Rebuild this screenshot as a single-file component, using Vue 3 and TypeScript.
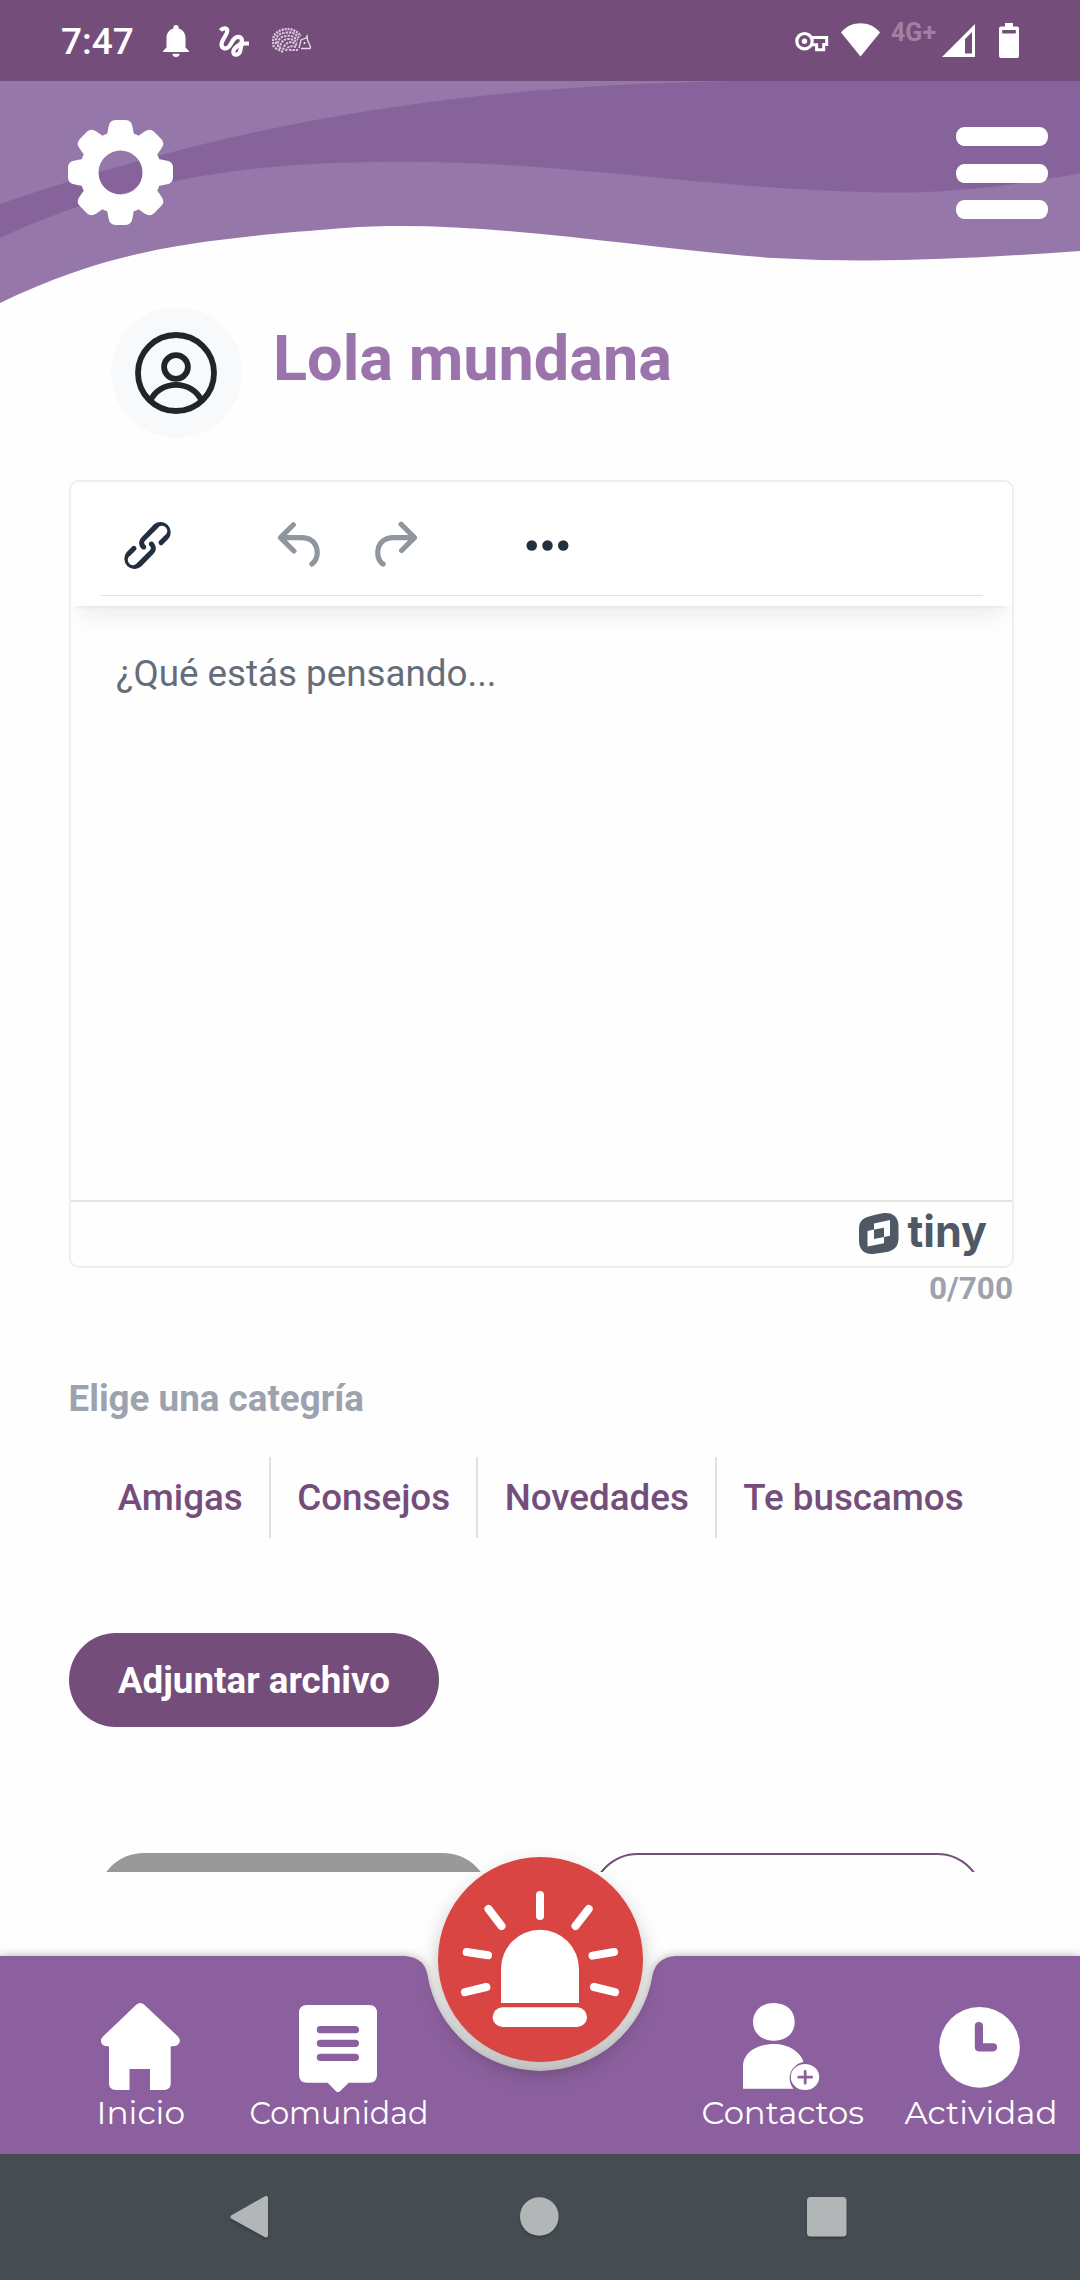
<script setup lang="ts">
interface NavItem {
  id: string
  label: string
  x: number
  width: number
}

const categories: string[] = ['Amigas', 'Consejos', 'Novedades', 'Te buscamos']
const toothAngles: number[] = [0, 45, 90, 135, 180, 225, 270, 315]
const gearTooth = 'M-13.4-38L-12-45.5Q-11-52.5-5-52.5H5Q11-52.5 12-45.5L13.4-38Z'
const navLabels: NavItem[] = [
  { id: 'home', label: 'Inicio', x: 96.5, width: 88.500 },
  { id: 'community', label: 'Comunidad', x: 249.5, width: 179 },
  { id: 'contacts', label: 'Contactos', x: 701.5, width: 162.500 },
  { id: 'activity', label: 'Actividad', x: 904.5, width: 153 },
]
</script>

<template>
  <div class="screen">
    <div class="status">
      <span class="time">7:47</span>
      <svg class="bell" width="26" height="32" viewBox="0 0 26 32">
        <path d="M13 0a2.6 2.6 0 0 1 2.6 2.6v1C20 4.700 22.500 8.500 22.500 13v9.500L26 26v1H0v-1l3.500-3.500V13C3.500 8.500 6 4.700 10.400 3.600v-1A2.600 2.600 0 0 1 13 0zM9.500 28.800h7a3.500 3.200 0 0 1-7 0z" fill="#fff" />
      </svg>
      <svg class="squiggle" width="30" height="31" viewBox="0 0 30 31">
        <path d="M1.500 4.500C4 1.500 8.500 1.500 8.300 5C8 9.500 2.300 13.500 2.500 19C3 23 7.500 23.500 10 20.500C13 17 14 11 19 10.800C23.500 11 23.800 15 21.500 17.800C18.500 20.500 14.300 22 14.300 26C14.500 29.800 19 29.500 20.800 26C22.500 22.500 21 18.500 24.500 17.500H30" fill="none" stroke="#fff" stroke-width="4.200" />
      </svg>
      <svg class="hedgehog" width="40" height="25" viewBox="0 0 40 25">
        <path d="M2 19C-1 12 2 4 10 2C18-1 25 3 29 8" fill="none" stroke="#d9cadb" stroke-width="2.500" stroke-dasharray="2 1" />
        <path d="M4 16C3 9 7 5 12 5C20 3 24 6 27 10M6 19C5 12 9 8 14 8C20 7 23 10 26 12M8 21C8 15 11 11 16 11C20 11 23 12 25 15M11 22C12 17 15 14 20 14L25 17M14 23C15 19 18 17 24 19M3 20L11 24M17 22H26" fill="none" stroke="#d9cadb" stroke-width="2.100" stroke-dasharray="2.400 1" />
        <path d="M27 20L29 12L34 10L35 8L35.500 12L38.500 19L38 20.500H29" fill="none" stroke="#e6dce8" stroke-width="1.300" />
        <circle cx="32.500" cy="15" r="1" fill="#fff" />
      </svg>
      <svg class="key" width="34" height="21" viewBox="0 0 34 21">
        <circle cx="9.500" cy="10.200" r="7.700" fill="none" stroke="#fff" stroke-width="3.200" />
        <path d="M15.500 6.600H31.700V13.400H28.700V18.800H21.600V13.800H15.500" fill="none" stroke="#fff" stroke-width="3" />
        <circle cx="9.500" cy="10.200" r="2.700" fill="#fff" />
      </svg>
      <svg class="wifi" width="40" height="34" viewBox="0 0 40 34">
        <path d="M19.500 33.500L0 9.500C10-2.700 29-2.700 39 9.500z" fill="#fff" />
      </svg>
      <span class="net">4G+</span>
      <svg class="signal" width="33" height="33" viewBox="0 0 33 33">
        <path fill-rule="evenodd" d="M33 0V33H0zM30 8L23 15V29.500H30z" fill="#fff" />
      </svg>
      <svg class="battery" width="20" height="35" viewBox="0 0 20 35">
        <path fill-rule="evenodd" d="M6 0H14V3.500H18Q20 3.500 20 5.500V33Q20 35 18 35H2Q0 35 0 33V5.500Q0 3.500 2 3.500H6zM3.200 7V10.500H16.800V7z" fill="#fff" />
      </svg>
    </div>

    <main class="content">
      <header class="header">
        <svg class="waves" width="1080" height="225" viewBox="0 81 1080 225">
          <path d="M0 81H1080V251C980 258 880 264 774 258C640 249 480 218 344 228C190 240 110 250 0 303Z" fill="#9677a9" />
          <path d="M0 204C260 115 480 85 740 81H1080V173.500C1020 184 960 193 888 192.500C700 190 560 159 379 162C250 162 120 182 0 238Z" fill="#86649b" />
          <g transform="translate(120.500 172.500)">
            <path fill-rule="evenodd" fill="#fff" d="M0-41A41 41 0 1 1 0 41A41 41 0 1 1 0-41ZM0-22A22 22 0 1 0 0 22A22 22 0 1 0 0-22Z" />
            <path v-for="a in toothAngles" :key="a" :d="gearTooth" :transform="`rotate(${a})`" fill="#fff" />
          </g>
        </svg>
        <button class="menu" aria-label="Menú"><i /><i /><i /></button>
      </header>

      <section class="profile">
        <div class="avatar">
          <svg width="82" height="82" viewBox="0 0 82 82" fill="none" stroke="#212529" stroke-width="5.800">
            <circle cx="41" cy="41" r="38" />
            <circle cx="41" cy="35" r="11.900" />
            <path d="M15.500 68.500C20 58.500 30 52.800 41 52.800S62 58.500 66.500 68.500" />
          </svg>
        </div>
        <h1>Lola mundana</h1>
      </section>

      <section class="editor">
        <div class="toolbar">
          <div class="tools">
            <svg class="tool link" viewBox="0 0 24 24"><path d="M6.200 12.300a1 1 0 0 1 1.400 1.400l-2 2a2 2 0 1 0 2.600 2.800l4.800-4.800a1 1 0 0 0 0-1.400 1 1 0 1 1 1.400-1.300 2.900 2.900 0 0 1 0 4L9.600 20a3.900 3.900 0 0 1-5.500-5.500l2-2Zm11.600-.6a1 1 0 0 1-1.400-1.400l2-2a2 2 0 1 0-2.600-2.800L11 10.300a1 1 0 0 0 0 1.400A1 1 0 1 1 9.600 13a2.900 2.900 0 0 1 0-4L14.400 4a3.900 3.900 0 0 1 5.500 5.500l-2 2Z" /></svg>
            <svg class="tool undo" viewBox="0 0 24 24"><path d="M6.400 8H12c3.700 0 6.200 2 6.800 5.100.6 2.700-.4 5.600-2.300 6.800a1 1 0 0 1-1-1.800c1.100-.6 1.800-2.700 1.400-4.600-.5-2.100-2.100-3.500-4.900-3.500H6.400l3.300 3.300a1 1 0 1 1-1.400 1.400l-5-5a1 1 0 0 1 0-1.400l5-5a1 1 0 0 1 1.400 1.400L6.400 8Z" /></svg>
            <svg class="tool redo" viewBox="0 0 24 24"><path d="M17.600 10H12c-2.800 0-4.400 1.400-4.900 3.500-.4 2 .3 4 1.400 4.600a1 1 0 1 1-1 1.800c-2-1.200-2.900-4.100-2.300-6.800.6-3 3-5.100 6.800-5.100h5.600l-3.300-3.300a1 1 0 1 1 1.400-1.400l5 5a1 1 0 0 1 0 1.400l-5 5a1 1 0 0 1-1.400-1.400l3.300-3.300Z" /></svg>
            <svg class="tool more" viewBox="0 0 24 24"><circle cx="6" cy="12" r="2" /><circle cx="12" cy="12" r="2" /><circle cx="18" cy="12" r="2" /></svg>
          </div>
        </div>
        <div class="typing">¿Qué estás pensando...</div>
        <div class="brand">
          <svg width="130" height="56" viewBox="858 1206 130 56" fill="#4e5965">
            <path fill-rule="evenodd" d="M869 1216.500Q876 1214 884 1213C893 1212.300 898.500 1217 898.500 1226V1238C898.500 1246 895 1250 887 1252L873 1254C864 1254.500 859 1249 859 1241V1229C859 1222 862 1218.500 869 1216.500ZM874 1223.500V1229.500L867.500 1231V1246.500L884 1243.200V1237L890 1235.700V1220ZM874 1229.500L884 1227.800V1237L874 1239Z" />
            <text x="907.500" y="1246.500" font-family="Inter, sans-serif" font-weight="700" font-size="44" textLength="79.500" lengthAdjust="spacingAndGlyphs">tiny</text>
          </svg>
        </div>
      </section>

      <div class="counter">0/700</div>
      <h2>Elige una categría</h2>
      <div class="tabs">
        <button v-for="c in categories" :key="c">{{ c }}</button>
      </div>
      <button class="attach">Adjuntar archivo</button>
      <div class="actions">
        <div class="action filled" />
        <div class="action outlined" />
      </div>
    </main>

    <nav class="nav">
      <svg class="nav-art" width="1080" height="320" viewBox="0 1834 1080 320">
        <path class="nav-shape" fill="#8c609e" d="M0 1956H405Q424.500 1957.500 427.500 1975A114 114 0 0 0 652.600 1975Q656.500 1957 676 1956H1080V2154H0Z" />
        <circle class="sos" cx="540.500" cy="1959.500" r="102.500" fill="#d94543" />
        <g stroke="#fff" stroke-width="8" stroke-linecap="round">
          <path d="M540 1895V1916M488.500 1909L501.500 1926M588.700 1909L575.500 1926M466.700 1952L488 1955.300M614 1952L592.500 1955.600M465 1992.200L486.300 1987M615 1992.200L594 1987" />
        </g>
        <path d="M501 2003V1969A39 39.300 0 0 1 579 1969V2003Z" fill="#fff" />
        <rect x="492.700" y="2007.300" width="94.300" height="19.700" rx="9.850" fill="#fff" />

        <g fill="#fff">
          <path d="M136.500 2004.500Q140.300 2001.500 144 2004.500L178 2036.500Q181 2040 179 2043.500Q177 2046.300 173 2046.300H170.700V2083.500Q170.700 2090 164 2090H150V2069H129.500V2090H116Q109 2090 109 2083.500V2046.300H107.500Q103 2046.300 101.500 2043Q100 2039.500 103 2036.500Z" />
          <path fill-rule="evenodd" d="M307 2005H369Q377 2005 377 2013V2074.700Q377 2082.700 369 2082.700H348.700L340 2091.200Q338 2093 336 2091.200L327.700 2082.700H307Q299 2082.700 299 2074.700V2013Q299 2005 307 2005Z" />
          <path d="M774 2003C787 2003 794.700 2011.500 794.700 2022S787 2040.700 774 2040.700S753 2032.500 753 2022S760.500 2003 774 2003Z" />
          <path d="M743 2088.700V2066C743 2053 757 2044 774 2044C789 2044 800.500 2052 803.500 2062A17 16.500 0 0 0 793.500 2088.700Z" />
          <ellipse cx="805" cy="2077" rx="14.200" ry="13.100" />
          <circle cx="979.500" cy="2047.300" r="40.400" />
        </g>
        <g fill="none" stroke="#8c609e" stroke-linecap="round">
          <path d="M320.400 2029.700H355.400M320.400 2043.300H355.400M320.400 2057.300H355.400" stroke-width="7.300" />
          <path d="M798.700 2077.200H811.700M805.200 2071.300V2083.300" stroke-width="2.800" />
          <path d="M978.900 2026.200V2047.300H993" stroke-width="8.200" stroke-linejoin="round" />
        </g>
        <g class="nav-text">
          <text v-for="n in navLabels" :key="n.id" :x="n.x" y="2124" :textLength="n.width" lengthAdjust="spacingAndGlyphs">{{ n.label }}</text>
        </g>
      </svg>
    </nav>

    <div class="system">
      <svg width="50" height="50" viewBox="0 0 50 50"><path d="M41 6V43.500L7.500 25Z" stroke-width="4" /></svg>
      <svg width="50" height="50" viewBox="0 0 50 50"><circle cx="25.300" cy="24.500" r="19.300" stroke="none" /></svg>
      <svg width="50" height="50" viewBox="0 0 50 50"><rect x="4" y="5" width="39.500" height="39.500" rx="3.500" stroke="none" /></svg>
    </div>
  </div>
</template>

<style>
html, body { margin: 0; background: #fefefe; }
</style>

<style scoped>
.screen {
  width: 1080px;
  height: 2280px;
  overflow: hidden;
  display: flex;
  flex-direction: column;
  background: #fefefe;
  font-family: Roboto, "Liberation Sans", sans-serif;
}
button { border: 0; padding: 0; background: none; font: inherit; }
svg { display: block; flex: none; }

.status {
  height: 81px;
  flex: none;
  display: flex;
  align-items: flex-start;
  background: #744d7b;
  color: #fff;
}
.time { width: 102px; margin-left: 61px; font-size: 37px; font-weight: 500; line-height: 84px; }
.bell { margin-top: 25px; }
.squiggle { margin: 26px 0 0 30px; }
.hedgehog { margin: 28px 0 0 23px; }
.key { margin: 31px 0 0 483px; }
.wifi { margin: 23px 0 0 12px; }
.net { width: 51px; margin: 17px 0 0 10px; font-size: 25px; font-weight: 700; line-height: 32px; color: #a081a5; }
.signal { margin: 24px 0 0 0; }
.battery { margin: 23px 0 0 24px; }

.content { height: 1791px; flex: none; overflow: hidden; }
.header { position: relative; height: 225px; display: flex; justify-content: flex-end; }
.waves { position: absolute; inset: 0; }
.menu {
  position: relative;
  width: 92px;
  height: 92px;
  margin: 46px 32px 0 0;
  display: flex;
  flex-direction: column;
  justify-content: space-between;
}
.menu i { width: 92px; height: 19px; border-radius: 8px / 9px; background: #fff; }

.profile { height: 132px; padding-left: 111px; display: flex; gap: 31px; }
.avatar {
  box-sizing: border-box;
  width: 131px;
  height: 131px;
  margin-top: 1px;
  padding-right: 1px;
  border-radius: 50%;
  background: #f8f9fb;
  display: flex;
  align-items: center;
  justify-content: center;
}
h1 { margin: 15px 0 0; font-size: 63px; line-height: 76px; font-weight: 700; color: #9b74ab; }

.editor {
  box-sizing: border-box;
  width: 945px;
  height: 788px;
  margin: 42px 0 0 69px;
  border: 2px solid #eee;
  border-radius: 10px;
  display: flex;
  flex-direction: column;
  overflow: hidden;
}
.toolbar {
  height: 124px;
  flex: none;
  background: #fff;
  box-shadow: 0 5px 5px -5px rgba(34, 47, 62, .12), 0 21px 21px -10px rgba(34, 47, 62, .07);
}
.tools {
  height: 113px;
  margin: 0 29px;
  border-bottom: 1px solid #e0e2e5;
  display: flex;
  align-items: center;
}
.tool { width: 63px; height: 63px; fill: #222f3e; margin-top: 14px; }
.link { margin-left: 16px; }
.undo { margin-left: 91px; opacity: .5; }
.redo { margin-left: 29px; opacity: .5; }
.more { margin-left: 91px; }
.typing { flex: 1; padding: 46px 0 0 45px; font-size: 36.750px; line-height: 44px; color: #646d79; }
.brand { height: 64px; flex: none; border-top: 2px solid #e3e3e3; display: flex; justify-content: flex-end; padding-right: 24px; }
.brand svg { margin-top: 4px; overflow: visible; }

.counter { margin-right: 67px; padding-top: 1px; text-align: right; font-size: 31.500px; line-height: 40px; font-weight: 700; color: #9ca3af; }
h2 { margin: 68px 0 0 68.500px; font-size: 36.750px; line-height: 44px; font-weight: 700; color: #9ca3af; }
.tabs { height: 81px; margin: 36px 0 0 91.500px; display: flex; }
.tabs button { padding: 0 26.250px; font-size: 36.750px; font-weight: 500; color: #744d7b; white-space: nowrap; }
.tabs button + button { border-left: 2px solid #dee2e6; }
.attach {
  display: block;
  width: 370px;
  height: 94px;
  margin: 95px 0 0 69px;
  border-radius: 47px;
  background: #744d7b;
  color: #fff;
  font-size: 36.750px;
  font-weight: 700;
}
.actions { display: flex; gap: 101px; margin: 126px 0 0 97px; }
.action { box-sizing: border-box; width: 393px; height: 94px; border-radius: 47px; }
.filled { background: #999; }
.outlined { border: 2px solid #744d7b; }

.nav { position: relative; height: 198px; margin-top: 84px; flex: none; }
.nav-art { position: absolute; left: 0; bottom: 0; overflow: hidden; }
.nav-shape { filter: drop-shadow(0 0 5px rgba(0, 0, 0, .3)); }
.sos { filter: drop-shadow(0 10px 10px rgba(0, 0, 0, .26)); }
.nav-text { font-family: Montserrat, Inter, sans-serif; font-size: 31px; font-weight: 400; fill: #fff; }

.system {
  position: relative;
  height: 126px;
  flex: none;
  background: #454d52;
  display: flex;
  align-items: center;
  gap: 239px;
  padding-left: 225px;
}
.system svg { fill: #b2b6b7; stroke: #b2b6b7; stroke-linejoin: round; filter: drop-shadow(0 2px 1px rgba(0, 0, 0, .2)); }
</style>
